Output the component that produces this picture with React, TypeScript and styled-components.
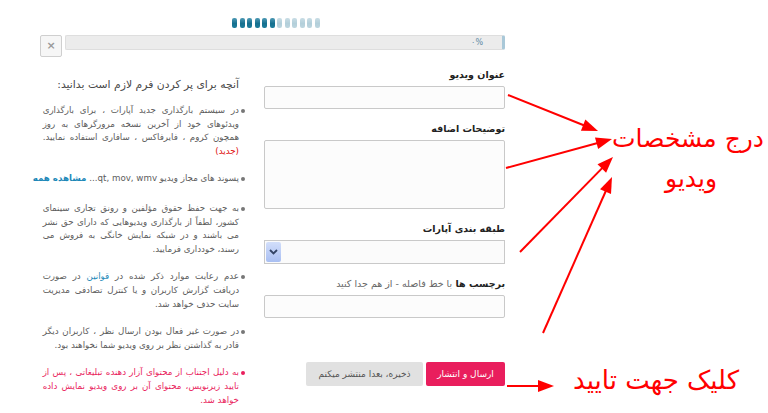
import React from "react";
import styled, { createGlobalStyle } from "styled-components";

const GlobalStyle = createGlobalStyle`
  body {
    margin: 0;
    background: #fff;
  }
`;

const FONT = `"DejaVu Sans", "Liberation Sans", sans-serif`;

const Page = styled.div`
  position: relative;
  width: 768px;
  height: 413px;
  overflow: hidden;
  font-family: ${FONT};
  background: #fff;
`;

const Steps = styled.div`
  display: flex;
  gap: 2.5px;
  margin-left: 232px;
  padding-top: 18px;
`;

const Step = styled.span<{ $done: boolean }>`
  width: 5px;
  height: 10px;
  border-radius: 2px;
  background: ${(p) =>
    p.$done
      ? "linear-gradient(#4f9ab5, #16708f 55%, #1d7d9c)"
      : "linear-gradient(#c9dde5, #b3cfda 55%, #bed6df)"};
`;

const Header = styled.div`
  display: flex;
  gap: 3px;
  width: 465px;
  margin: 7px 0 0 40px;
`;

const CloseButton = styled.button`
  width: 22px;
  height: 22px;
  padding: 0;
  border: 1px solid #cfcfcf;
  border-radius: 2px;
  background: #f6f6f6;
  color: #9a9a9a;
  font-size: 11px;
  font-weight: bold;
  font-family: "DejaVu Sans", sans-serif;
  line-height: 18px;
`;

const Progress = styled.div`
  flex: 1;
  height: 15px;
  box-sizing: border-box;
  border: 1px solid #dedede;
  border-right: 3px solid #a9c8d8;
  border-radius: 2px;
  background: #ececec;
  display: flex;
  justify-content: flex-end;
  align-items: center;
  padding-right: 19px;
`;

const Percent = styled.span`
  font-size: 8px;
  color: #5f8ba5;
  direction: ltr;
`;

const Body = styled.div`
  display: flex;
  direction: rtl;
  gap: 19px;
  width: 465px;
  margin: 11px 0 0 40px;
`;

const FormColumn = styled.div`
  width: 241px;
  flex-shrink: 0;
`;

const Field = styled.div`
  margin-bottom: 13px;
`;

const Label = styled.div`
  font-size: 9.5px;
  line-height: 14px;
  font-weight: bold;
  color: #222;
  margin-bottom: 4px;

  span {
    font-weight: normal;
    color: #666;
  }
`;

const TextInput = styled.div<{ $tall?: boolean }>`
  height: ${(p) => (p.$tall ? "69px" : "23px")};
  box-sizing: border-box;
  border: 1px solid #c9c9c9;
  border-radius: 2px;
  background: #fcfcfc;
`;

const Select = styled.div`
  height: 24px;
  box-sizing: border-box;
  border: 1px solid #c9c9c9;
  background: #fbfbfb;
  display: flex;
  justify-content: flex-end;
  padding: 1px;
`;

const SelectArrow = styled.div`
  width: 15px;
  height: 100%;
  border-radius: 2px;
  background: linear-gradient(#d2defa, #a9bff2);
  display: flex;
  align-items: center;
  justify-content: center;
`;

const Actions = styled.div`
  display: flex;
  gap: 3px;
  margin-top: 44px;
`;

const ActionButton = styled.button<{ $primary?: boolean }>`
  height: 24px;
  width: ${(p) => (p.$primary ? "79px" : "117px")};
  border: none;
  border-radius: 2px;
  background: ${(p) => (p.$primary ? "#e91e5d" : "#e1e1e1")};
  color: ${(p) => (p.$primary ? "#fff" : "#555")};
  font-family: ${FONT};
  font-size: 9px;
  padding: 0;
`;

const InfoColumn = styled.div`
  flex: 1;
  padding: 9px 6px 0 13px;
`;

const InfoTitle = styled.div`
  font-size: 10.8px;
  line-height: 16px;
  color: #4a4a4a;
  margin-bottom: 11px;
  margin-left: -8px;
  white-space: nowrap;
`;

const Rules = styled.ul`
  list-style: none;
  margin: 0;
  padding: 0;
`;

const Rule = styled.li<{ $alert?: boolean; $single?: boolean }>`
  position: relative;
  margin-bottom: ${(p) => (p.$single ? "16px" : "14px")};
  margin-left: ${(p) => (p.$single ? "-10px" : "0")};
  font-size: 8.7px;
  line-height: 13.6px;
  text-align: justify;
  white-space: ${(p) => (p.$single ? "nowrap" : "normal")};
  color: ${(p) => (p.$alert ? "#e91e5d" : "#5c5c5c")};

  &::before {
    content: "";
    position: absolute;
    right: -6px;
    top: 5px;
    width: 4px;
    height: 4px;
    border-radius: 50%;
    background: ${(p) => (p.$alert ? "#e91e5d" : "#777")};
  }
`;

const Tag = styled.span`
  color: #e01010;
`;

const Link = styled.a<{ $bold?: boolean }>`
  color: #1c88b8;
  text-decoration: none;
  font-weight: ${(p) => (p.$bold ? "bold" : "normal")};
`;

const Note = styled.div<{ $size: number }>`
  position: absolute;
  direction: rtl;
  color: #f00;
  font-size: ${(p) => p.$size}px;
  line-height: 1.2;
  white-space: nowrap;
  text-align: center;
`;

const Overlay = styled.svg`
  position: absolute;
  left: 0;
  top: 0;
  pointer-events: none;
`;

const arrows: [number, number, number, number][] = [
  [508, 95, 598, 131],
  [506, 168, 612, 139],
  [520, 252, 613, 157],
  [543, 333, 612, 177],
  [507, 386, 554, 386],
];

function head(x1: number, y1: number, x2: number, y2: number) {
  const dx = x2 - x1;
  const dy = y2 - y1;
  const len = Math.hypot(dx, dy);
  const ux = dx / len;
  const uy = dy / len;
  const bx = x2 - ux * 16;
  const by = y2 - uy * 16;
  const w = 6;
  return `${x2},${y2} ${bx - uy * w},${by + ux * w} ${bx + uy * w},${by - ux * w}`;
}

export default function App() {
  return (
    <Page>
      <GlobalStyle />
      <Steps>
        {Array.from({ length: 12 }, (_, i) => (
          <Step key={i} $done={i < 6} />
        ))}
      </Steps>

      <Header>
        <CloseButton type="button">×</CloseButton>
        <Progress>
          <Percent>۰%</Percent>
        </Progress>
      </Header>

      <Body>
        <FormColumn>
          <Field>
            <Label>عنوان ویدیو</Label>
            <TextInput />
          </Field>
          <Field>
            <Label>توضیحات اضافه</Label>
            <TextInput $tall />
          </Field>
          <Field>
            <Label>طبقه بندی آپارات</Label>
            <Select>
              <SelectArrow>
                <svg width="9" height="6" viewBox="0 0 9 6">
                  <path d="M1 1l3.5 3.5L8 1" fill="none" stroke="#334466" strokeWidth="1.8" />
                </svg>
              </SelectArrow>
            </Select>
          </Field>
          <Field>
            <Label>
              برچسب ها <span>با خط فاصله - از هم جدا کنید</span>
            </Label>
            <TextInput />
          </Field>
          <Actions>
            <ActionButton $primary type="button">ارسال و انتشار</ActionButton>
            <ActionButton type="button">ذخیره، بعدا منتشر میکنم</ActionButton>
          </Actions>
        </FormColumn>

        <InfoColumn>
          <InfoTitle>آنچه برای پر کردن فرم لازم است بدانید:</InfoTitle>
          <Rules>
            <Rule>
              در سیستم بارگذاری جدید آپارات ، برای بارگذاری ویدئوهای خود از آخرین نسخه
              مرورگرهای به روز همچون کروم ، فایرفاکس ، سافاری استفاده نمایید.{" "}
              <Tag>(جدید)</Tag>
            </Rule>
            <Rule $single>
              پسوند های مجاز ویدیو qt, mov, wmv...{" "}
              <Link $bold href="#">مشاهده همه</Link>
            </Rule>
            <Rule>
              به جهت حفظ حقوق مؤلفین و رونق تجاری سینمای کشور، لطفاً از بارگذاری
              ویدیوهایی که دارای حق نشر می باشند و در شبکه نمایش خانگی به فروش می رسند،
              خودداری فرمایید.
            </Rule>
            <Rule>
              عدم رعایت موارد ذکر شده در <Link href="#">قوانین</Link> در صورت دریافت
              گزارش کاربران و یا کنترل تصادفی مدیریت سایت حذف خواهد شد.
            </Rule>
            <Rule>
              در صورت غیر فعال بودن ارسال نظر ، کاربران دیگر قادر به گذاشتن نظر بر روی
              ویدیو شما نخواهند بود.
            </Rule>
            <Rule $alert>
              به دلیل اجتناب از محتوای آزار دهنده تبلیغاتی ، پس از تایید زیرنویس، محتوای
              آن بر روی ویدیو نمایش داده خواهد شد.
            </Rule>
          </Rules>
        </InfoColumn>
      </Body>

      <Overlay width="768" height="413" viewBox="0 0 768 413">
        {arrows.map(([x1, y1, x2, y2], i) => {
          const dx = x2 - x1;
          const dy = y2 - y1;
          const len = Math.hypot(dx, dy);
          const ex = x2 - (dx / len) * 12;
          const ey = y2 - (dy / len) * 12;
          return (
            <g key={i}>
              <line x1={x1} y1={y1} x2={ex} y2={ey} stroke="#f00" strokeWidth="2" />
              <polygon points={head(x1, y1, x2, y2)} fill="#f00" />
            </g>
          );
        })}
      </Overlay>

      <Note $size={25} style={{ right: 4, top: 124 }}>درج مشخصات</Note>
      <Note $size={25} style={{ left: 665, top: 164 }}>ویدیو</Note>
      <Note $size={26} style={{ left: 573, top: 365 }}>کلیک جهت تایید</Note>
    </Page>
  );
}
